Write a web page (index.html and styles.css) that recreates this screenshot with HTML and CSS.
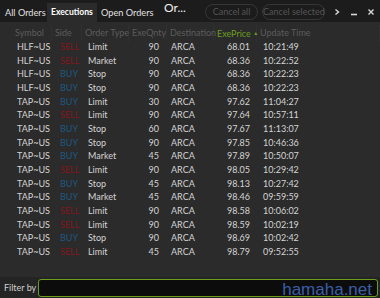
FILE: index.html
```html
<!DOCTYPE html>
<html>
	<head>
		<meta charset="utf-8" />
		<title>Executions</title>
		<link rel="stylesheet" href="styles.css">
	</head>
	<body class="main">
		<nav class="top-bar">
			<div class="tabs">
				<span class="tab all">All Orders</span>
				<span class="tab active">Executions</span>
				<span class="tab open">Open Orders</span>
				<span class="tab more">Or...</span>
			</div>
			<button type="button" class="pill cancel-all" disabled>Cancel all</button>
			<button type="button" class="pill cancel-selected" disabled>Cancel selected</button>
			<div class="window-controls">
				<svg width="8" height="8" viewBox="0 0 8 8"><path d="M2.5 1.5 L5.5 4 L2.5 6.5" fill="none" stroke="#d8d8d8" stroke-width="1.4"/></svg>
				<svg width="8" height="8" viewBox="0 0 8 8"><path d="M1 6.5 H7" stroke="#d8d8d8" stroke-width="1.6"/></svg>
				<svg width="8" height="8" viewBox="0 0 8 8"><path d="M1.5 1.5 L6.5 6.5 M6.5 1.5 L1.5 6.5" stroke="#d8d8d8" stroke-width="1.4"/></svg>
			</div>
		</nav>

		<main class="grid">
			<div class="row header">
				<p class="symbol">Symbol</p>
				<p class="side">Side</p>
				<p class="type">Order Type</p>
				<p class="qty">ExeQnty</p>
				<p class="dest">Destination</p>
				<p class="price sorted">ExePrice <span class="arrow">&#9650;</span></p>
				<p class="time">Update Time</p>
			</div>
			<div id="rows"></div>
		</main>

		<footer class="filter-bar">
			<label for="filter">Filter by</label>
			<input id="filter" type="text" />
			<span class="watermark">hamaha.net</span>
		</footer>

		<template id="row-template">
			<div class="row">
				<p class="symbol"></p>
				<p class="side"></p>
				<p class="type"></p>
				<p class="qty"></p>
				<p class="dest"></p>
				<p class="price"></p>
				<p class="time"></p>
			</div>
		</template>
		<script src="app.js"></script>
	</body>
</html>
```

FILE: styles.css
```css
:root {
    --font-family: "Lato", "Liberation Sans", sans-serif;
    --panel: rgb(43, 43, 43);
    --bar: rgb(28, 28, 28);
    --green: rgb(108, 158, 30);
}

body {
    margin: 0;
    padding: 0;
    overflow: hidden;
    width: 380px;
    height: 298px;
    font-family: var(--font-family);
    font-size: 9px;
    color: #d4d4d4;
    background-color: var(--panel);
}

p {
    margin: 0;
}

.main {
    display: flex;
    flex-direction: column;
}

.top-bar {
    display: flex;
    flex-direction: row;
    align-items: flex-end;
    height: 22px;
    background-color: var(--bar);
    white-space: nowrap;
}

.tabs {
    display: flex;
    align-items: flex-end;
    padding-left: 1px;
}

.tab {
    box-sizing: border-box;
    height: 19px;
    line-height: 19px;
    padding-left: 4px;
    color: #e0e0e0;
    font-size: 9.2px;
}

.tab.all { width: 46px; }
.tab.open { width: 55px; }

.tab.active {
    width: 50px;
    background-color: var(--panel);
    color: #ffffff;
    font-weight: bold;
    font-size: 8.6px;
}

.tab.more {
    width: 40px;
    height: 22px;
    padding-left: 12px;
    font-size: 12px;
    line-height: 15px;
    color: #f0f0f0;
}

button {
    font-family: var(--font-family);
}

.pill {
    align-self: center;
    height: 16px;
    margin-top: 1px;
    padding: 0;
    font-size: 9px;
    line-height: 13px;
    color: #555555;
    background: transparent;
    border: 1.5px solid #363636;
    border-radius: 8px;
    white-space: nowrap;
}

.cancel-all {
    margin-left: 13px;
    width: 53px;
}

.cancel-selected {
    margin-left: 4px;
    width: 63px;
}

.window-controls {
    display: flex;
    align-self: center;
    gap: 9px;
    margin-left: 8px;
    margin-top: 2px;
}

.grid {
    flex: 1;
    padding-left: 12px;
}

.row {
    display: grid;
    grid-template-columns: 40px 30px 47px 38px 47px 43px 1fr;
    height: 13.67px;
    line-height: 13.67px;
    white-space: nowrap;
}

.row.header {
    height: 16px;
    line-height: 16px;
    margin-top: 3px;
    margin-bottom: -1px;
    color: #5c5c5c;
}

.row.header p {
    padding-left: 3px;
    border-right: 1px solid #303030;
}

.row.header .sorted {
    color: var(--green);
}

.arrow {
    font-size: 5px;
    vertical-align: 2px;
}

.row .symbol { padding-left: 5px; }
.row .side { padding-left: 8px; }
.row .type { padding-left: 6px; }
.row .qty { text-align: right; padding-right: 8px; }
.row .dest { padding-left: 4px; }
.row .price { text-align: right; padding-right: 7px; }
.row .time { padding-left: 6px; }

.row.header .qty,
.row.header .price {
    text-align: left;
}

.sell {
    color: rgb(130, 22, 30);
}

.buy {
    color: rgb(30, 88, 130);
}

.filter-bar {
    position: relative;
    display: flex;
    align-items: center;
    height: 21px;
    background-color: rgb(36, 36, 36);
}

.filter-bar label {
    width: 34px;
    padding-left: 4px;
    color: #d0d0d0;
    font-size: 9px;
    white-space: nowrap;
}

#filter {
    flex: 1;
    height: 18px;
    margin-right: 2px;
    box-sizing: border-box;
    background-color: rgb(12, 12, 12);
    border: 1.5px solid var(--green);
    border-radius: 3px;
    color: #ffffff;
    outline: none;
}

.watermark {
    position: absolute;
    right: 8px;
    bottom: 0;
    line-height: 17px;
    color: rgb(58, 94, 166);
    font-family: "Liberation Sans", sans-serif;
    font-size: 17px;
}
```

FILE: app.js
```js
const executions = [
    ["HLF~US", "SELL", "Limit", 90, "ARCA", "68.01", "10:21:49"],
    ["HLF~US", "SELL", "Market", 90, "ARCA", "68.36", "10:22:52"],
    ["HLF~US", "BUY", "Stop", 90, "ARCA", "68.36", "10:22:23"],
    ["HLF~US", "BUY", "Stop", 90, "ARCA", "68.36", "10:22:23"],
    ["TAP~US", "BUY", "Limit", 30, "ARCA", "97.62", "11:04:27"],
    ["TAP~US", "SELL", "Limit", 90, "ARCA", "97.64", "10:57:11"],
    ["TAP~US", "BUY", "Stop", 60, "ARCA", "97.67", "11:13:07"],
    ["TAP~US", "BUY", "Stop", 90, "ARCA", "97.85", "10:46:36"],
    ["TAP~US", "BUY", "Market", 45, "ARCA", "97.89", "10:50:07"],
    ["TAP~US", "SELL", "Limit", 90, "ARCA", "98.05", "10:29:42"],
    ["TAP~US", "BUY", "Stop", 45, "ARCA", "98.13", "10:27:42"],
    ["TAP~US", "BUY", "Market", 45, "ARCA", "98.46", "09:59:59"],
    ["TAP~US", "SELL", "Limit", 90, "ARCA", "98.58", "10:06:02"],
    ["TAP~US", "SELL", "Limit", 90, "ARCA", "98.59", "10:02:19"],
    ["TAP~US", "BUY", "Stop", 90, "ARCA", "98.69", "10:02:42"],
    ["TAP~US", "SELL", "Limit", 45, "ARCA", "98.79", "09:52:55"],
];

const rows = document.getElementById("rows");
const template = document.getElementById("row-template");
const fields = ["symbol", "side", "type", "qty", "dest", "price", "time"];

for (const exec of executions) {
    const row = template.content.cloneNode(true);
    fields.forEach((field, i) => {
        row.querySelector("." + field).textContent = exec[i];
    });
    row.querySelector(".side").classList.add(exec[1] === "SELL" ? "sell" : "buy");
    rows.appendChild(row);
}
```
